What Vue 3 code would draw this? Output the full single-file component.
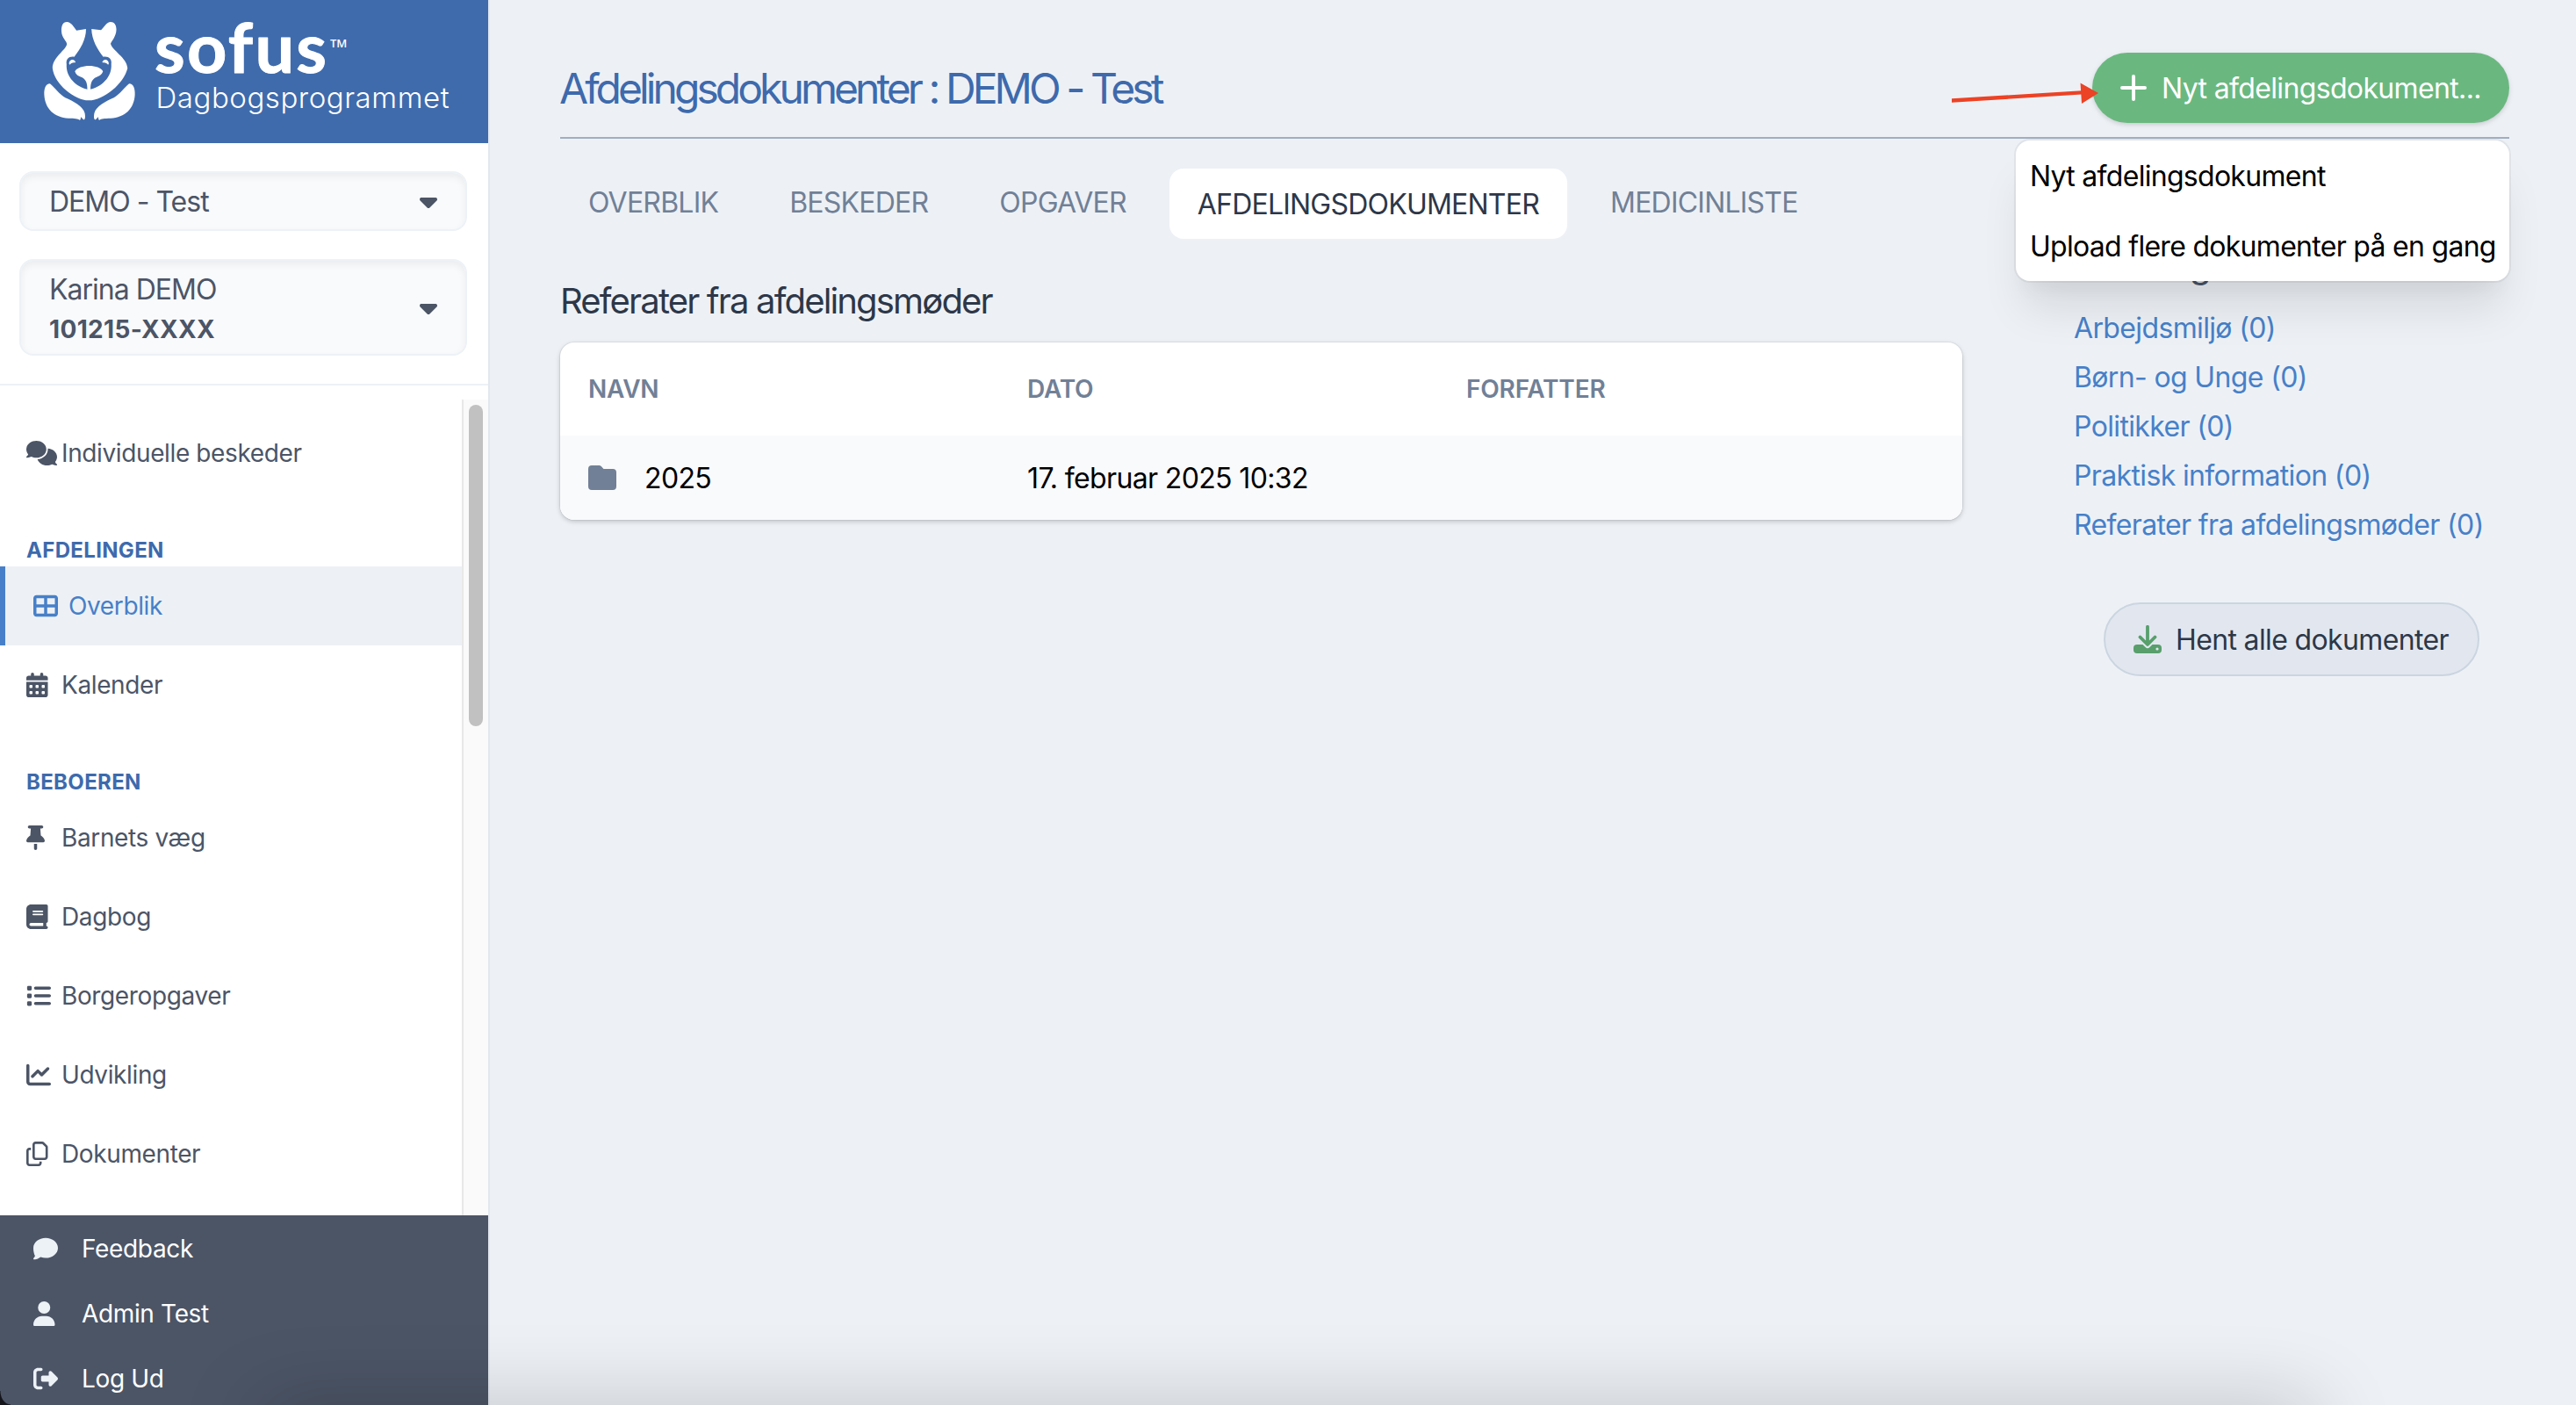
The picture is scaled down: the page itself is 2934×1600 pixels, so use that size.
<script setup>
import { ref } from "vue";

const icons = {
  comments: {
    box: "0 0 640 512",
    d: "M208 352c114.9 0 208-78.8 208-176S322.9 0 208 0S0 78.8 0 176c0 38.6 14.7 74.3 39.6 103.4c-3.5 9.4-8.7 17.7-14.2 24.7c-4.8 6.2-9.7 11-13.3 14.3c-1.8 1.6-3.3 2.9-4.3 3.7c-.5 .4-.9 .7-1.1 .8l-.2 .2C1 327.2-1.4 334.4 .8 340.9S9.1 352 16 352c21.8 0 43.8-5.6 62.1-12.5c9.2-3.5 17.8-7.4 25.2-11.4C134.1 343.3 169.8 352 208 352zM448 176c0 112.3-99.1 196.9-216.5 207C255.8 457.4 336.4 512 432 512c38.2 0 73.9-8.7 104.7-23.9c7.5 4 16 7.9 25.2 11.4c18.3 6.9 40.3 12.5 62.1 12.5c6.9 0 13.1-4.5 15.2-11.1c2.1-6.6-.2-13.8-5.8-17.9l-.2-.2c-.2-.2-.6-.4-1.1-.8c-1-.8-2.5-2-4.3-3.7c-3.6-3.3-8.5-8.1-13.3-14.3c-5.5-7-10.7-15.4-14.2-24.7c24.9-29 39.6-64.7 39.6-103.4c0-92.8-84.9-168.9-192.6-175.5c.4 5.1 .6 10.3 .6 15.5z"
  },
  table: {
    box: "0 0 512 512",
    d: "M448 96V224H288V96H448zm0 192V416H288V288H448zM224 224H64V96H224V224zM64 288H224V416H64V288zM64 32C28.7 32 0 60.7 0 96V416c0 35.3 28.7 64 64 64H448c35.3 0 64-28.7 64-64V96c0-35.3-28.7-64-64-64H64z"
  },
  calendar: {
    box: "0 0 448 512",
    d: "M128 0c17.7 0 32 14.3 32 32V64H288V32c0-17.7 14.3-32 32-32s32 14.3 32 32V64h48c26.5 0 48 21.5 48 48v48H0V112C0 85.5 21.5 64 48 64H96V32c0-17.7 14.3-32 32-32zM0 192H448V464c0 26.5-21.5 48-48 48H48c-26.5 0-48-21.5-48-48V192zm64 80v32c0 8.8 7.2 16 16 16h32c8.8 0 16-7.2 16-16V272c0-8.8-7.2-16-16-16H80c-8.8 0-16 7.2-16 16zm128 0v32c0 8.8 7.2 16 16 16h32c8.8 0 16-7.2 16-16V272c0-8.8-7.2-16-16-16H208c-8.8 0-16 7.2-16 16zm144-16c-8.8 0-16 7.2-16 16v32c0 8.8 7.2 16 16 16h32c8.8 0 16-7.2 16-16V272c0-8.8-7.2-16-16-16H336zM64 400v32c0 8.8 7.2 16 16 16h32c8.8 0 16-7.2 16-16V400c0-8.8-7.2-16-16-16H80c-8.8 0-16 7.2-16 16zm144-16c-8.8 0-16 7.2-16 16v32c0 8.8 7.2 16 16 16h32c8.8 0 16-7.2 16-16V400c0-8.8-7.2-16-16-16H208zm112 16v32c0 8.8 7.2 16 16 16h32c8.8 0 16-7.2 16-16V400c0-8.8-7.2-16-16-16H336c-8.8 0-16 7.2-16 16z"
  },
  pin: {
    box: "0 0 384 512",
    d: "M32 32C32 14.3 46.3 0 64 0H320c17.7 0 32 14.3 32 32s-14.3 32-32 32H290.5l11.4 148.2c36.7 19.9 65.7 53.2 79.5 94.7l1 3c3.3 9.8 1.6 20.5-4.4 28.8s-15.7 13.3-26 13.3H32c-10.3 0-19.9-4.9-26-13.3s-7.7-19.1-4.4-28.8l1-3c13.8-41.5 42.8-74.8 79.5-94.7L93.5 64H64C46.3 64 32 49.7 32 32zM160 384h64v96c0 17.7-14.3 32-32 32s-32-14.3-32-32V384z"
  },
  book: {
    box: "0 0 448 512",
    d: "M96 0C43 0 0 43 0 96V416c0 53 43 96 96 96H384h32c17.7 0 32-14.3 32-32s-14.3-32-32-32V384c17.7 0 32-14.3 32-32V32c0-17.7-14.3-32-32-32H384 96zm0 384H352v64H96c-17.7 0-32-14.3-32-32s14.3-32 32-32zm32-240c0-8.8 7.2-16 16-16H336c8.8 0 16 7.2 16 16s-7.2 16-16 16H144c-8.8 0-16-7.2-16-16zm16 48H336c8.8 0 16 7.2 16 16s-7.2 16-16 16H144c-8.8 0-16-7.2-16-16s7.2-16 16-16z"
  },
  list: {
    box: "0 0 512 512",
    d: "M40 48C26.7 48 16 58.7 16 72v48c0 13.3 10.7 24 24 24H88c13.3 0 24-10.7 24-24V72c0-13.3-10.7-24-24-24H40zM192 64c-17.7 0-32 14.3-32 32s14.3 32 32 32H480c17.7 0 32-14.3 32-32s-14.3-32-32-32H192zm0 160c-17.7 0-32 14.3-32 32s14.3 32 32 32H480c17.7 0 32-14.3 32-32s-14.3-32-32-32H192zm0 160c-17.7 0-32 14.3-32 32s14.3 32 32 32H480c17.7 0 32-14.3 32-32s-14.3-32-32-32H192zM16 232v48c0 13.3 10.7 24 24 24H88c13.3 0 24-10.7 24-24V232c0-13.3-10.7-24-24-24H40c-13.3 0-24 10.7-24 24zM40 368c-13.3 0-24 10.7-24 24v48c0 13.3 10.7 24 24 24H88c13.3 0 24-10.7 24-24V392c0-13.3-10.7-24-24-24H40z"
  },
  chart: {
    box: "0 0 512 512",
    d: "M64 64c0-17.7-14.3-32-32-32S0 46.3 0 64V400c0 44.2 35.8 80 80 80H480c17.7 0 32-14.3 32-32s-14.3-32-32-32H80c-8.8 0-16-7.2-16-16V64zm406.6 86.6c12.5-12.5 12.5-32.8 0-45.3s-32.8-12.5-45.3 0L320 210.7l-57.4-57.4c-12.5-12.5-32.8-12.5-45.3 0l-112 112c-12.5 12.5-12.5 32.8 0 45.3s32.8 12.5 45.3 0L240 221.3l57.4 57.4c12.5 12.5 32.8 12.5 45.3 0l128-128z"
  },
  copy: {
    box: "0 0 448 512",
    d: "M384 336H192c-8.8 0-16-7.2-16-16V64c0-8.8 7.2-16 16-16h140.1L400 115.9V320c0 8.8-7.2 16-16 16zM192 384H384c35.3 0 64-28.7 64-64V115.9c0-12.7-5.1-24.9-14.1-33.9L366.1 14.1c-9-9-21.2-14.1-33.9-14.1H192c-35.3 0-64 28.7-64 64V320c0 35.3 28.7 64 64 64zM64 128c-35.3 0-64 28.7-64 64V448c0 35.3 28.7 64 64 64H256c35.3 0 64-28.7 64-64V416H272v32c0 8.8-7.2 16-16 16H64c-8.8 0-16-7.2-16-16V192c0-8.8 7.2-16 16-16H96V128H64z"
  },
  comment: {
    box: "0 0 512 512",
    d: "M512 240c0 114.9-114.6 208-256 208c-37.1 0-72.3-6.4-104.1-17.9c-11.9 8.7-31.3 20.6-54.3 30.6C73.6 471.1 44.7 480 16 480c-6.5 0-12.3-3.9-14.8-9.9c-2.5-6-1.1-12.8 3.4-17.4c.4-.4 1.1-1.1 2-2.1c6.4-6.9 18.2-22.2 28.4-45C13.6 366.1 0 306 0 240C0 125.1 114.6 32 256 32s256 93.1 256 208z"
  },
  user: {
    box: "0 0 448 512",
    d: "M224 256A128 128 0 1 0 224 0a128 128 0 1 0 0 256zm-45.7 48C79.8 304 0 383.8 0 482.3C0 498.7 13.3 512 29.7 512H418.3c16.4 0 29.7-13.3 29.7-29.7C448 383.8 368.2 304 269.7 304H178.3z"
  },
  logout: {
    box: "0 0 512 512",
    d: "M377.9 105.9L500.7 228.7c7.2 7.2 11.3 17.1 11.3 27.3s-4.1 20.1-11.3 27.3L377.9 406.1c-6.4 6.4-15 9.9-24 9.9c-18.7 0-33.9-15.2-33.9-33.9l0-62.1-128 0c-17.7 0-32-14.3-32-32l0-64c0-17.7 14.3-32 32-32l128 0 0-62.1c0-18.7 15.2-33.9 33.9-33.9c9 0 17.6 3.6 24 9.9zM160 96L96 96c-17.7 0-32 14.3-32 32l0 256c0 17.7 14.3 32 32 32l64 0c17.7 0 32 14.3 32 32s-14.3 32-32 32l-64 0c-53 0-96-43-96-96L0 128C0 75 43 32 96 32l64 0c17.7 0 32 14.3 32 32s-14.3 32-32 32z"
  }
};

const navGroups = [
  {
    title: "",
    items: [{ label: "Individuelle beskeder", icon: "comments" }]
  },
  {
    title: "Afdelingen",
    items: [
      { label: "Overblik", icon: "table" },
      { label: "Kalender", icon: "calendar" }
    ]
  },
  {
    title: "Beboeren",
    items: [
      { label: "Barnets væg", icon: "pin" },
      { label: "Dagbog", icon: "book" },
      { label: "Borgeropgaver", icon: "list" },
      { label: "Udvikling", icon: "chart" },
      { label: "Dokumenter", icon: "copy" }
    ]
  }
];

const footerItems = [
  { label: "Feedback", icon: "comment" },
  { label: "Admin Test", icon: "user" },
  { label: "Log Ud", icon: "logout" }
];

const tabs = ["Overblik", "Beskeder", "Opgaver", "Afdelingsdokumenter", "Medicinliste"];

const documents = [{ name: "2025", date: "17. februar 2025 10:32", author: "" }];

const folders = [
  { name: "Arbejdsmiljø", count: 0 },
  { name: "Børn- og Unge", count: 0 },
  { name: "Politikker", count: 0 },
  { name: "Praktisk information", count: 0 },
  { name: "Referater fra afdelingsmøder", count: 0 }
];

const activeNav = ref("Overblik");
const activeTab = ref("Afdelingsdokumenter");
const menuOpen = ref(true);
</script>

<template>
  <div class="app">
    <aside class="sidebar">
      <div class="brand">
        <svg class="brand-bear" viewBox="138 74 286 336" preserveAspectRatio="none" aria-hidden="true">
          <path
            fill="#fff"
            d="M270 98L240 103C229 88 224 75 210 74C197 74 192 88 193 106C194 130 210 138 210 150C206 172 165 195 165 232C171 285 232 341 279 342C326 341 388 285 400 232C398 195 352 172 347 148C350 138 364 125 365 100C365 84 358 74 347 74C334 75 328 90 317 102L287 98z"
          />
          <path
            fill="#3f6bac"
            d="M270 97C270 135 252 166 233 193C218 190 206 200 209 218C206 262 240 298 279 305C318 298 352 262 349 218C352 200 340 190 324 193C306 168 288 135 287 97z"
          />
          <path
            fill="#fff"
            d="M235 243C248 218 312 218 323 243C320 254 310 260 300 264C288 272 284 282 284 305H274C274 282 270 272 258 264C246 260 238 254 235 243zM217 217C216 205 228 199 234 206C238 211 238 213 234 213C228 212 222 216 219 220zM341 217C342 205 330 199 324 206C320 211 320 213 324 213C330 212 336 216 339 220z"
          />
          <path
            id="bear-arm"
            fill="#fff"
            d="M157 285C145 284 138 300 139 322C141 370 170 400 215 403C235 404 245 404 250 409C255 408 252 402 254 399L262 408C268 408 268 396 266 385C260 362 230 345 205 333C185 320 172 298 157 285z"
          />
          <use href="#bear-arm" transform="translate(562 0) scale(-1 1)" />
        </svg>
        <svg class="brand-text" viewBox="0 0 360 140">
          <text class="brand-name" x="0" y="69" textLength="196">sofus</text>
          <text class="brand-tm" x="200" y="40">TM</text>
          <text class="brand-sub" x="1.5" y="109" textLength="334">Dagbogsprogrammet</text>
        </svg>
      </div>

      <div class="selectors">
        <button class="selector" type="button">
          <span>DEMO - Test</span>
          <svg class="caret" viewBox="0 192 320 192" aria-hidden="true">
            <path d="M137.4 374.6c12.5 12.5 32.8 12.5 45.3 0l128-128c9.2-9.2 11.9-22.9 6.9-34.9s-16.6-19.8-29.6-19.8L32 192c-12.9 0-24.6 7.8-29.6 19.8s-2.2 25.7 6.9 34.9l128 128z" />
          </svg>
        </button>
        <button class="selector selector-tall" type="button">
          <span>Karina DEMO<strong>101215-XXXX</strong></span>
          <svg class="caret" viewBox="0 192 320 192" aria-hidden="true">
            <path d="M137.4 374.6c12.5 12.5 32.8 12.5 45.3 0l128-128c9.2-9.2 11.9-22.9 6.9-34.9s-16.6-19.8-29.6-19.8L32 192c-12.9 0-24.6 7.8-29.6 19.8s-2.2 25.7 6.9 34.9l128 128z" />
          </svg>
        </button>
      </div>

      <div class="scroll-area">
        <nav class="nav">
          <section v-for="group in navGroups" :key="group.title">
            <h3 v-if="group.title" class="nav-title">{{ group.title }}</h3>
            <a
              v-for="item in group.items"
              :key="item.label"
              class="nav-item"
              :class="{ active: item.label === activeNav }"
              @click="activeNav = item.label"
            >
              <span class="nav-icon">
                <svg :viewBox="icons[item.icon].box"><path :d="icons[item.icon].d" /></svg>
              </span>
              {{ item.label }}
            </a>
          </section>
        </nav>
        <div class="track"><div class="thumb"></div></div>
      </div>

      <footer class="side-footer">
        <a v-for="item in footerItems" :key="item.label" class="footer-item">
          <span class="footer-icon">
            <svg :viewBox="icons[item.icon].box"><path :d="icons[item.icon].d" /></svg>
          </span>
          {{ item.label }}
        </a>
      </footer>
    </aside>

    <main class="main">
      <header class="head">
        <h1 class="title">Afdelingsdokumenter : DEMO - Test</h1>
        <button class="btn-new" type="button" @click="menuOpen = !menuOpen">
          <svg class="plus" viewBox="0 0 30 30" aria-hidden="true">
            <path d="M15 2V28M2 15H28" />
          </svg>
          Nyt afdelingsdokument...
        </button>
        <svg class="arrow" viewBox="0 0 168 24" aria-hidden="true">
          <path d="M0 18.2L148 9.3V13.5L0 22.8z" />
          <path d="M146.5 .5L167 12L148 24z" />
        </svg>
        <div v-if="menuOpen" class="menu">
          <a class="menu-item">Nyt afdelingsdokument</a>
          <a class="menu-item">Upload flere dokumenter på en gang</a>
        </div>
      </header>

      <nav class="tabs">
        <a
          v-for="tab in tabs"
          :key="tab"
          class="tab"
          :class="{ active: tab === activeTab }"
          @click="activeTab = tab"
        >{{ tab }}</a>
      </nav>

      <div class="content">
        <section>
          <h2 class="section-title">Referater fra afdelingsmøder</h2>
          <div class="card">
            <div class="row row-head">
              <span>Navn</span>
              <span>Dato</span>
              <span>Forfatter</span>
            </div>
            <div v-for="doc in documents" :key="doc.name" class="row row-body">
              <span class="doc-name">
                <svg class="folder" viewBox="0 0 32 28" aria-hidden="true">
                  <path d="M0 4a4 4 0 0 1 4-4h8c1.4 0 2.5 .5 3.2 1.5L17.5 4H28a4 4 0 0 1 4 4v16a4 4 0 0 1-4 4H4a4 4 0 0 1-4-4z" />
                </svg>
                {{ doc.name }}
              </span>
              <span>{{ doc.date }}</span>
              <span>{{ doc.author }}</span>
            </div>
          </div>
        </section>

        <aside class="folders">
          <h2 class="section-title">Afdelinger</h2>
          <a v-for="folder in folders" :key="folder.name" class="folder-link">
            {{ folder.name }} ({{ folder.count }})
          </a>
          <button class="btn-download" type="button">
            <svg class="download" viewBox="0 0 32 32" aria-hidden="true">
              <rect x="0" y="22" width="32" height="10" rx="4" />
              <circle class="dot" cx="27" cy="27" r="1.6" />
              <path class="gap" d="M7.5 14L16 22.5L24.5 14" />
              <path class="stroke" d="M16 1.8V21M7.5 13.5L16 22L24.5 13.5" />
            </svg>
            Hent alle dokumenter
          </button>
        </aside>
      </div>
    </main>

    <div class="dock-shade"></div>
    <div class="corner"></div>
  </div>
</template>

<style>
body {
  margin: 0;
  overflow: hidden;
}
</style>

<style scoped>
.app {
  position: relative;
  display: flex;
  height: 1600px;
  overflow: hidden;
  background: #edf1f6;
  color: #000;
  font-family: Inter, "Liberation Sans", sans-serif;
  font-size: 32px;
  letter-spacing: -0.64px;
}

button {
  margin: 0;
  font: inherit;
  letter-spacing: inherit;
  text-align: left;
}

.sidebar {
  display: flex;
  flex-direction: column;
  box-sizing: border-box;
  width: 558px;
  border-right: 2px solid #e2e8f0;
  background: #fff;
  color: #4c5566;
}

.brand {
  display: flex;
  align-items: flex-start;
  gap: 22px;
  box-sizing: border-box;
  height: 163px;
  padding: 25px 0 0 50px;
  background: #3f6bac;
}

.brand-bear {
  flex: none;
  width: 104px;
  height: 112px;
}

.brand-text {
  flex: none;
  width: 360px;
  height: 140px;
  margin-top: -11px;
  overflow: visible;
  fill: #fff;
}

.brand-name {
  font-family: Lato, sans-serif;
  font-size: 79px;
  font-weight: 700;
  letter-spacing: 0;
  stroke: #fff;
  stroke-width: 1px;
  stroke-linejoin: round;
}

.brand-tm {
  font-family: "Open Sans", sans-serif;
  font-size: 13px;
  font-weight: 600;
  letter-spacing: 0;
}

.brand-sub {
  font-size: 33px;
  font-weight: 300;
  letter-spacing: 0;
}

.selectors {
  display: flex;
  flex-direction: column;
  gap: 32px;
  padding: 32px 24px 32px 22px;
  border-bottom: 2px solid #edf2f7;
}

.selector {
  display: flex;
  align-items: center;
  justify-content: space-between;
  box-sizing: border-box;
  height: 68px;
  padding: 2px 32px 0;
  border: 2px solid #edf2f7;
  border-radius: 16px;
  background: #f9fafc;
  box-shadow: inset 0 4px 8px rgba(0, 0, 0, 0.06);
  color: inherit;
  line-height: 48px;
  letter-spacing: -1px;
}

.selector-tall {
  height: 110px;
}

.selector strong {
  display: block;
  font-size: 28px;
  line-height: 42px;
  letter-spacing: 0.35px;
}

.caret {
  width: 20px;
  height: 12px;
  margin-top: 2px;
  fill: currentColor;
}

.scroll-area {
  display: flex;
  flex: 1;
  min-height: 0;
  padding-top: 16px;
}

.nav {
  flex: 1;
  padding-top: 16px;
  font-size: 28px;
  letter-spacing: -0.38px;
}

.nav-title {
  height: 84px;
  margin: 0;
  padding-left: 30px;
  color: #3e6aac;
  font-size: 24px;
  font-weight: 700;
  line-height: 131px;
  letter-spacing: 0.33px;
  text-transform: uppercase;
}

.nav-item {
  display: flex;
  align-items: center;
  height: 90px;
  padding-left: 30px;
}

.nav-item.active {
  padding-left: 32px;
  border-left: 6px solid #4780c8;
  background: #edf1f6;
  color: #4780c8;
}

.nav-icon {
  display: flex;
  width: 40px;
}

.nav-icon svg,
.footer-icon svg {
  flex: none;
  width: auto;
  height: 28px;
  fill: currentColor;
}

.track {
  width: 28px;
  border-left: 2px solid #e8e8e8;
  background: #fafafa;
}

.thumb {
  width: 16px;
  height: 366px;
  margin: 6px 0 0 6px;
  border-radius: 8px;
  background: #c1c1c1;
}

.side-footer {
  box-sizing: border-box;
  height: 216px;
  padding-top: 1px;
  background: #4c5566;
  color: #fff;
  font-size: 28px;
  letter-spacing: -0.35px;
}

.footer-item {
  display: flex;
  align-items: center;
  height: 74px;
  padding-left: 38px;
}

.footer-icon {
  display: flex;
  width: 55px;
  color: #edf2f7;
}

.main {
  flex: 1;
  padding: 60px 76px 0 80px;
}

.head {
  position: relative;
  display: flex;
  align-items: center;
  justify-content: space-between;
  height: 80px;
  padding-bottom: 16px;
  border-bottom: 2px solid #a0aec0;
}

.title {
  margin: 0 0 0 -1px;
  color: #3e6aac;
  font-size: 48px;
  font-weight: 400;
  letter-spacing: -3.94px;
}

.btn-new {
  display: flex;
  align-items: center;
  gap: 17px;
  box-sizing: border-box;
  width: 475px;
  height: 80px;
  padding: 0 0 0 32px;
  border: 0;
  border-radius: 40px;
  background: #6ab87f;
  box-shadow: 0 2px 6px rgba(0, 0, 0, 0.1), 0 2px 4px rgba(0, 0, 0, 0.06);
  color: #fff;
  white-space: nowrap;
}

.plus {
  width: 30px;
  height: 30px;
  fill: none;
  stroke: currentColor;
  stroke-width: 4;
  stroke-linecap: round;
}

.arrow {
  position: absolute;
  top: 34px;
  right: 467px;
  width: 168px;
  height: 24px;
  fill: #ec4225;
}

.menu {
  position: absolute;
  top: 100px;
  right: 0;
  z-index: 10;
  width: 562px;
  height: 160px;
  border-radius: 16px;
  background: #fff;
  box-shadow: 0 0 0 2px rgba(0, 0, 0, 0.05), 0 40px 50px -10px rgba(0, 0, 0, 0.1), 0 20px 20px -10px rgba(0, 0, 0, 0.04);
  letter-spacing: -0.71px;
}

.menu-item {
  display: block;
  box-sizing: border-box;
  height: 80px;
  padding: 1px 16px 0;
  line-height: 80px;
  white-space: nowrap;
}

.tabs {
  display: flex;
  align-items: flex-start;
  gap: 17px;
  height: 80px;
  margin-top: 34px;
  color: #718096;
  letter-spacing: -0.78px;
}

.tab {
  box-sizing: border-box;
  height: 80px;
  padding: 1px 32px 0;
  border-radius: 16px;
  line-height: 76px;
  text-transform: uppercase;
}

.tab.active {
  background: #fff;
  color: #2d3748;
  line-height: 80px;
}

.content {
  display: grid;
  grid-template-columns: 1597px 496px;
  gap: 127px;
}

.section-title {
  margin: 41px 0 17px;
  color: #2d3748;
  font-size: 40px;
  font-weight: 400;
  line-height: 60px;
  letter-spacing: -1.84px;
}

.card {
  overflow: hidden;
  height: 202px;
  border-radius: 16px;
  background: #fff;
  box-shadow: 0 0 0 1px rgba(0, 0, 0, 0.05), 0 2px 6px rgba(0, 0, 0, 0.12), 0 2px 4px rgba(0, 0, 0, 0.08);
}

.row {
  display: grid;
  grid-template-columns: 500px 500px 1fr;
  align-items: center;
  padding-left: 32px;
}

.row-head {
  height: 106px;
  color: #718096;
  font-size: 28px;
  font-weight: 600;
  letter-spacing: -0.2px;
  text-transform: uppercase;
}

.row-body {
  height: 96px;
  background: #f9fafc;
}

.doc-name {
  display: flex;
  align-items: center;
  gap: 32px;
}

.folder {
  width: 32px;
  height: 28px;
  fill: #718096;
}

.folders .section-title {
  margin: 0 0 14px;
  color: #4a5568;
  letter-spacing: 0;
}

.folder-link {
  display: block;
  color: #4780c8;
  line-height: 56px;
  white-space: nowrap;
}

.btn-download {
  display: flex;
  align-items: center;
  gap: 16px;
  box-sizing: border-box;
  width: 428px;
  height: 84px;
  margin: 60px auto 0;
  padding: 0 0 0 32px;
  border: 2px solid #cbd5e0;
  border-radius: 42px;
  background: #e2e7ef;
  color: #2d3748;
  white-space: nowrap;
}

.download {
  width: 32px;
  height: 32px;
  fill: #589f6c;
}

.download path {
  fill: none;
  stroke-linecap: round;
  stroke-linejoin: round;
}

.download .gap {
  stroke: #e2e7ef;
  stroke-width: 7;
}

.download .stroke {
  stroke: #589f6c;
  stroke-width: 3.8;
}

.download .dot {
  fill: #e2e7ef;
}

.dock-shade {
  position: absolute;
  top: 1600px;
  left: 290px;
  right: 290px;
  height: 60px;
  border-radius: 40px;
  box-shadow: 0 0 90px rgba(0, 0, 0, 0.22);
}

/* rounded window edge */
.corner {
  position: absolute;
  left: 0;
  bottom: 0;
  width: 12px;
  height: 16px;
  background: radial-gradient(ellipse 12px 16px at 100% 0, transparent 92%, #15151c 100%);
}
</style>
